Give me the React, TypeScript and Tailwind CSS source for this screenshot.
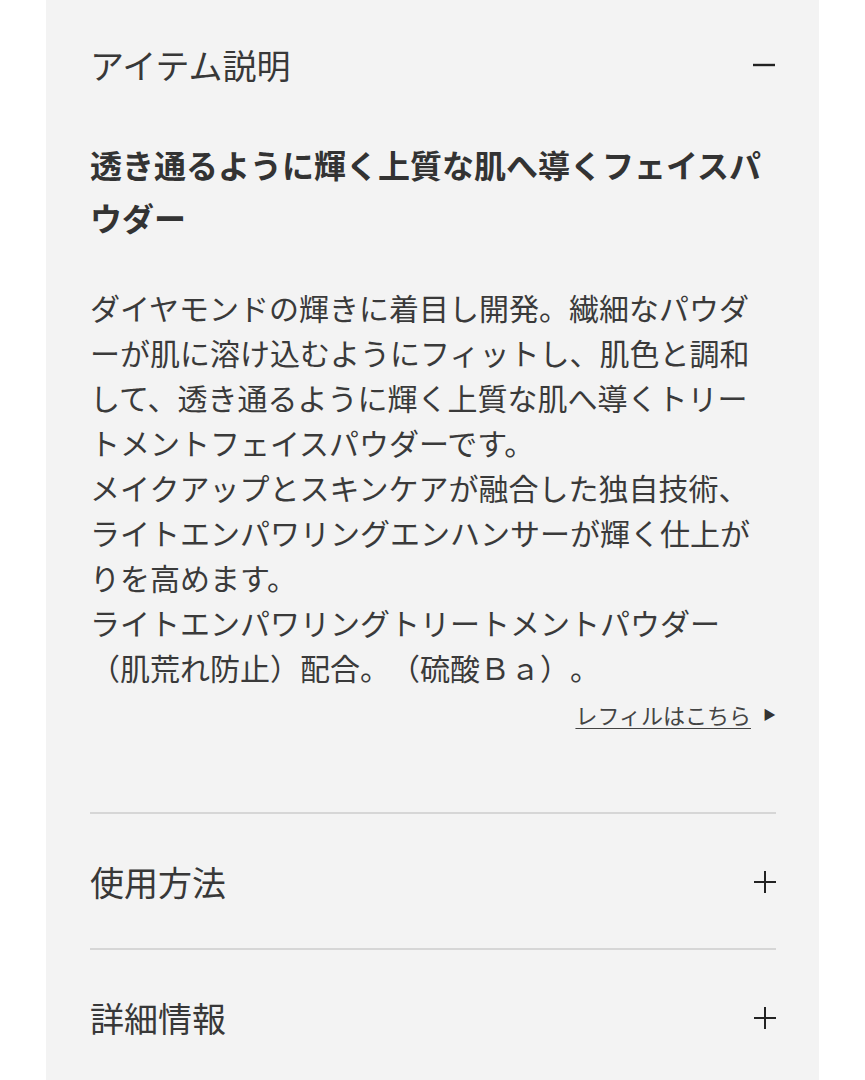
const font = { fontFamily: '"Noto Sans CJK JP", "Noto Sans", sans-serif' };

const bodyLines = [
  'ダイヤモンドの輝きに着目し開発。繊細なパウダ',
  'ーが肌に溶け込むようにフィットし、肌色と調和',
  'して、透き通るように輝く上質な肌へ導くトリー',
  'トメントフェイスパウダーです。',
  'メイクアップとスキンケアが融合した独自技術、',
  'ライトエンパワリングエンハンサーが輝く仕上が',
  'りを高めます。',
  'ライトエンパワリングトリートメントパウダー',
  '（肌荒れ防止）配合。（硫酸Ｂａ）。',
];

function Minus() {
  return (
    <svg width="24" height="24" viewBox="0 0 24 24" className="text-[#222]">
      <line x1="1" y1="12" x2="23" y2="12" stroke="currentColor" strokeWidth="2.4" />
    </svg>
  );
}

function Plus() {
  return (
    <svg width="24" height="24" viewBox="0 0 24 24" className="text-[#222]">
      <line x1="1" y1="12" x2="23" y2="12" stroke="currentColor" strokeWidth="2" />
      <line x1="12" y1="1" x2="12" y2="23" stroke="currentColor" strokeWidth="2" />
    </svg>
  );
}

function Section({ title }: { title: string }) {
  return (
    <div className="border-t-2 border-[#d6d6d6] pt-[42px] pb-[41px] flex items-center justify-between">
      <h2 className="text-[34px] leading-[51px] text-[#383838]">{title}</h2>
      <div className="mr-[-1px]">
        <Plus />
      </div>
    </div>
  );
}

export default function App() {
  return (
    <div className="min-h-[1080px] bg-white" style={font}>
      <div className="ml-[46px] w-[773px] min-h-[1080px] bg-[#f3f3f3] pl-[44px] pr-[43px] pt-[39px]">
        {/* item description, open */}
        <div className="flex items-center justify-between">
          <h2 className="text-[34px] leading-[51px] text-[#383838]">アイテム説明</h2>
          <Minus />
        </div>

        <h3 className="mt-[48px] text-[32px] leading-[53px] font-bold text-[#333]">
          透き通るように輝く上質な肌へ導くフェイスパ
          <br />
          ウダー
        </h3>

        <p className="mt-[41px] text-[30px] leading-[45px] text-[#3a3a3a] whitespace-nowrap [text-spacing-trim:space-all]">
          {bodyLines.map((line, i) => (
            <span key={i}>
              {line}
              {i < bodyLines.length - 1 && <br />}
            </span>
          ))}
        </p>

        <div className="mt-[9px] flex justify-end items-center">
          <a href="#" className="text-[22px] leading-[30px] text-[#444] underline underline-offset-4 decoration-1">
            レフィルはこちら
          </a>
          <span className="ml-[12px] text-[13px] text-[#333]">▶</span>
        </div>

        <div className="h-[83px]" />

        <Section title="使用方法" />
        <Section title="詳細情報" />
      </div>
    </div>
  );
}
